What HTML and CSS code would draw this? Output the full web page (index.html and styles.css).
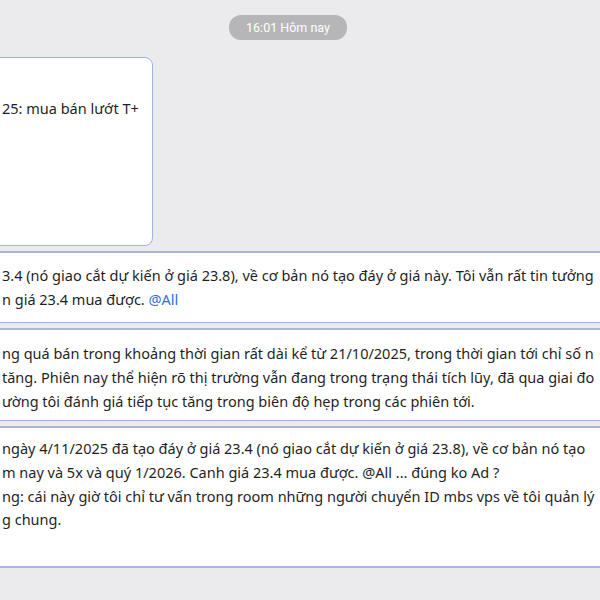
FILE: index.html
```html
<!DOCTYPE html>
<html lang="vi">
<head>
    <meta charset="UTF-8">
    <meta name="viewport" content="width=device-width, initial-scale=1.0">
    <title>Chat</title>
    <link rel="stylesheet" href="styles.css">
</head>
<body>
    <div id='chat'>
        <div class='time-row'>
            <div class='time-pill'>16:01 Hôm nay</div>
        </div>

        <div class='msg msg-short'>
            <p>25: mua bán lướt T+</p>
        </div>

        <div class='msg msg-wide m2'>
            <p>3.4 (nó giao cắt dự kiến ở giá 23.8), về cơ bản nó tạo đáy ở giá này. Tôi vẫn rất tin tưởng</p>
            <p>n giá 23.4 mua được. <span class='mention'>@All</span></p>
        </div>

        <div class='msg msg-wide m3'>
            <p>ng quá bán trong khoảng thời gian rất dài kể từ 21/10/2025, trong thời gian tới chỉ số n</p>
            <p>tăng. Phiên nay thể hiện rõ thị trường vẫn đang trong trạng thái tích lũy, đã qua giai đo</p>
            <p>ường tôi đánh giá tiếp tục tăng trong biên độ hẹp trong các phiên tới.</p>
        </div>

        <div class='msg msg-wide m4'>
            <p>ngày 4/11/2025 đã tạo đáy ở giá 23.4 (nó giao cắt dự kiến ở giá 23.8), về cơ bản nó tạo</p>
            <p>m nay và 5x và quý 1/2026. Canh giá 23.4 mua được. @All ... đúng ko Ad ?</p>
            <p>ng: cái này giờ tôi chỉ tư vấn trong room những người chuyển ID mbs vps về tôi quản lý</p>
            <p>g chung.</p>
        </div>
    </div>
</body>
</html>
```

FILE: styles.css
```css
html, body {
    margin: 0;
    height: 100%;
    overflow: hidden;
}
body {
    background-color: #ebebed;
    font-family: "Noto Sans", "Open Sans", sans-serif;
    color: #1f1f1f;
}
#chat {
    display: flex;
    flex-direction: column;
    gap: 5px;
    padding-top: 15px;
    margin-left: -30px;
}
.time-row {
    display: flex;
    justify-content: center;
    padding-left: 6px;
    margin-bottom: 12px;
}
.time-pill {
    background-color: #b6b6b8;
    color: #ffffff;
    font-family: Roboto, "Noto Sans", sans-serif;
    font-size: 12.5px;
    height: 25px;
    line-height: 25px;
    padding: 0 17px;
    border-radius: 12px;
}
.msg {
    background-color: #ffffff;
    border: 1px solid #9db4e6;
    border-radius: 8px;
    box-sizing: border-box;
    font-size: 14.5px;
    line-height: 23.8px;
    padding-left: 31px;
}
.msg p {
    margin: 0;
    white-space: nowrap;
}
.msg-short {
    width: 183px;
    height: 189px;
    padding-top: 39px;
}
.msg-wide {
    width: 720px;
    border-top: 2px solid #a7b8d0;
}
.m2 {
    height: 72px;
    padding-top: 11px;
}
.m3 {
    height: 93px;
    padding-top: 12px;
}
.m4 {
    height: 142px;
    padding-top: 9px;
    border-bottom: 2px solid #a3b9ee;
}
.mention {
    color: #2e6fd8;
}
```
